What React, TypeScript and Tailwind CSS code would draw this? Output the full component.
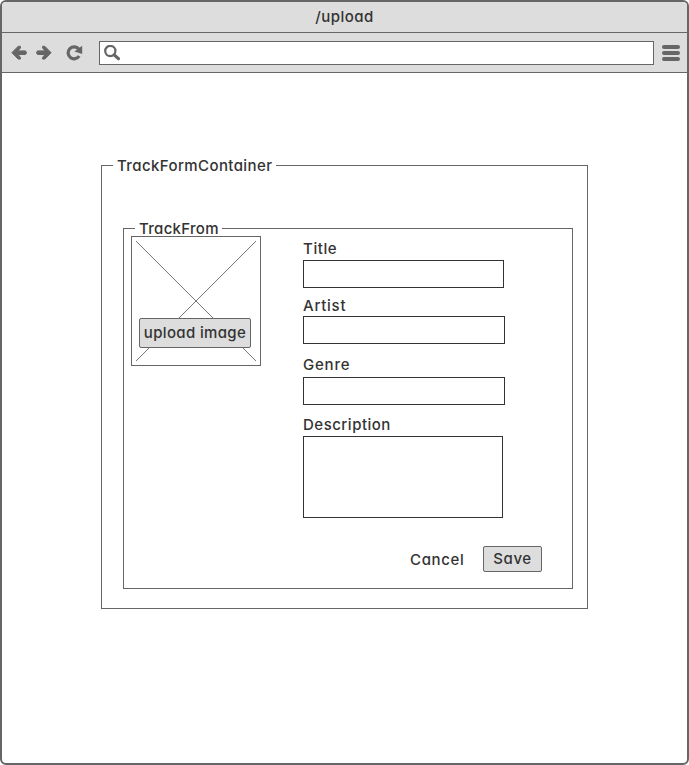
import type { ReactNode } from "react";

function BackIcon() {
  return (
    <svg className="block h-4 w-4" viewBox="0 0 16 16" fill="#666" stroke="#666" strokeLinejoin="round">
      <path d="M0.9 7.7 7.2 1.3H9.4V3L7 5.9H14.3L15.3 6.8V8.6L14.3 9.5H7L9.4 12.4V14.1H7.2Z" strokeWidth="1" />
    </svg>
  );
}

function ForwardIcon() {
  return (
    <svg className="block h-4 w-4" viewBox="0 0 16 16" fill="#666" stroke="#666" strokeLinejoin="round">
      <path d="M15.1 7.7 8.8 1.3H6.6V3L9 5.9H1.7L0.7 6.8V8.6L1.7 9.5H9L6.6 12.4V14.1H8.8Z" strokeWidth="1" />
    </svg>
  );
}

function ReloadIcon() {
  return (
    <svg className="block h-4 w-[17px]" viewBox="0 0 17 16" fill="none">
      <path d="M12.8 4A6 6 0 1 0 13.2 11" stroke="#666" strokeWidth="3.2" />
      <path d="M16.2 0.8V9L8.4 6.4Z" fill="#666" />
    </svg>
  );
}

function SearchIcon() {
  return (
    <svg className="block h-4 w-4" viewBox="0 0 16 16" fill="none" stroke="#666">
      <circle cx="6.3" cy="6" r="5.1" strokeWidth="2.2" />
      <path d="M10.2 9.8 14.4 13.7" strokeWidth="3.2" strokeLinecap="round" />
    </svg>
  );
}

function Label({ className, children }: { className: string; children: ReactNode }) {
  return <div className={`h-5 whitespace-nowrap leading-5 ${className}`}>{children}</div>;
}

export default function App() {
  return (
    <div className="flex h-[765px] w-[689px] flex-col overflow-hidden rounded-[6px] border-2 border-[#666] bg-white font-['Inter','Liberation_Sans',sans-serif] text-[15px] font-medium leading-5 text-[#333] [font-feature-settings:'cv11']">
      <div className="flex h-[31px] shrink-0 justify-center border-b border-[#666] bg-[#ddd] pt-[5px]">
        <span className="tracking-[0.45px]">/upload</span>
      </div>
      <div className="flex h-10 shrink-0 border-b border-[#666] bg-[#ddd] pl-[9px] pt-2">
        <div className="flex pt-1">
          <BackIcon />
          <div className="ml-[9px]"><ForwardIcon /></div>
          <div className="ml-[14px]"><ReloadIcon /></div>
        </div>
        <div className="ml-4 h-6 w-[555px] border border-[#666] bg-white pl-1 pt-[3px]">
          <SearchIcon />
        </div>
        <div className="ml-2 flex flex-col gap-[2px] pt-1">
          <div className="h-1 w-[18px] rounded-full bg-[#666]" />
          <div className="h-1 w-[18px] rounded-full bg-[#666]" />
          <div className="h-1 w-[18px] rounded-full bg-[#666]" />
        </div>
      </div>

      <fieldset className="ml-[99px] mt-[83px] h-[453px] w-[487px] border border-[#666] pl-[21px]">
        <legend className="-ml-[10px] h-[19px] whitespace-nowrap pl-1 pr-1">
          <span className="tracking-[0.4px]">TrackFormContainer</span>
        </legend>
        <fieldset className="mt-11 h-[370px] w-[450px] border border-[#666] pl-[7px]">
          <legend className="ml-1 h-[19px] whitespace-nowrap pl-1 pr-[3px]">
            <span className="tracking-[0.3px]">TrackFrom</span>
          </legend>
          <div className="-mt-[2px] flex">
            <div className="relative h-[130px] w-[130px] border border-[#666]">
              <svg className="block h-32 w-32" viewBox="0 0 128 128" stroke="#666" strokeWidth="0.9">
                <path d="M4 4 124 124M124 4 4 124" />
              </svg>
              <button className="absolute left-[7px] top-[81px] flex h-[30px] w-28 justify-center whitespace-nowrap rounded-[2px] border border-[#666] bg-[#ddd] pt-1">
                <span className="tracking-[0.35px]">upload image</span>
              </button>
            </div>
            <div className="ml-[42px] pt-[3px]">
              <Label className="tracking-[0.6px]">Title</Label>
              <div className="mt-[1px] h-7 w-[201px] border border-[#333]" />
              <Label className="mt-2 tracking-[0.75px]">Artist</Label>
              <div className="h-7 w-[202px] border border-[#333]" />
              <Label className="mt-[11px] tracking-[0.8px]">Genre</Label>
              <div className="mt-[2px] h-7 w-[202px] border border-[#333]" />
              <Label className="mt-[10px] tracking-[0.5px]">Description</Label>
              <div className="mt-[1px] h-[82px] w-[200px] border border-[#333]" />
              <div className="mt-7 flex pl-[107px]">
                <button className="mt-1 h-5 w-[73px] text-left leading-5 tracking-[0.65px]">Cancel</button>
                <button className="flex h-[26px] w-[59px] justify-center rounded-[2px] border border-[#666] bg-[#ddd] pt-[2px]">
                  <span className="tracking-[0.6px]">Save</span>
                </button>
              </div>
            </div>
          </div>
        </fieldset>
      </fieldset>
    </div>
  );
}
